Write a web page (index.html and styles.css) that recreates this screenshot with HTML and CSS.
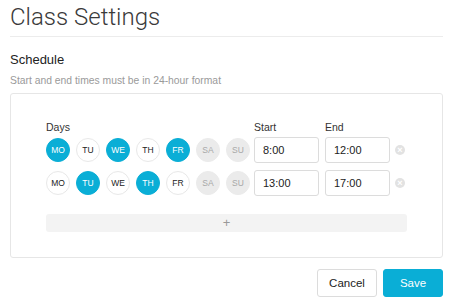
FILE: index.html
```html
<!DOCTYPE html>
<html>
<head>
    <title>Class Settings</title>
    <link rel="stylesheet" href="styles.css">
</head>
<body>
    <div class="page">
        <h1>Class Settings</h1>

        <h2>Schedule</h2>
        <p class="hint">Start and end times must be in 24-hour format</p>

        <div class="panel">
            <div class="schedule">
                <div class="label">Days</div>
                <div class="label">Start</div>
                <div class="label">End</div>
                <div></div>

                <div class="days">
                    <span class="day on">MO</span>
                    <span class="day">TU</span>
                    <span class="day on">WE</span>
                    <span class="day">TH</span>
                    <span class="day on">FR</span>
                    <span class="day off">SA</span>
                    <span class="day off">SU</span>
                </div>
                <input class="time" type="text" value="8:00">
                <input class="time" type="text" value="12:00">
                <span class="remove">&times;</span>

                <div class="days">
                    <span class="day">MO</span>
                    <span class="day on">TU</span>
                    <span class="day">WE</span>
                    <span class="day on">TH</span>
                    <span class="day">FR</span>
                    <span class="day off">SA</span>
                    <span class="day off">SU</span>
                </div>
                <input class="time" type="text" value="13:00">
                <input class="time" type="text" value="17:00">
                <span class="remove">&times;</span>
            </div>

            <button class="add">+</button>
        </div>

        <div class="actions">
            <button class="btn">Cancel</button>
            <button class="btn primary">Save</button>
        </div>
    </div>
</body>
</html>
```

FILE: styles.css
```css
body {
    margin: 0;
    font-family: "Liberation Sans", Arial, sans-serif;
    color: #333;
    background: #fff;
}
.page {
    padding: 0 7px 0 10px;
}
h1 {
    margin: 0;
    padding: 4px 0 6px;
    font-family: Roboto, "Liberation Sans", sans-serif;
    font-weight: 300;
    font-size: 24px;
    line-height: 26px;
    color: #3a3a3a;
    border-bottom: 1px solid #ececec;
}
h2 {
    margin: 15px 0 0;
    font-size: 13px;
    font-weight: normal;
    line-height: 16px;
    color: #222;
}
.hint {
    margin: 6px 0 0;
    font-size: 10.35px;
    line-height: 14px;
    color: #9a9a9a;
}
.panel {
    margin-top: 5px;
    border: 1px solid #e6e6e6;
    border-radius: 3px;
    padding: 27px 35px 25px;
}
.schedule {
    display: grid;
    grid-template-columns: 204px 65px 65px 10px;
    column-gap: 4px;
    row-gap: 7px;
    align-items: center;
}
.schedule > :nth-child(4n+3) { margin-left: 2px; }
.schedule > :nth-child(4n) { margin-left: 3px; }
.label {
    font-size: 10.5px;
    line-height: 12px;
    color: #333;
    margin-bottom: -3px;
}
.days {
    display: flex;
    gap: 6px;
}
.day {
    width: 22px;
    height: 22px;
    border-radius: 50%;
    border: 1px solid #e8e8e8;
    background: #fff;
    color: #222;
    font-size: 8.5px;
    display: flex;
    align-items: center;
    justify-content: center;
}
.day.on {
    background: #0aaed6;
    border-color: #0aaed6;
    color: #fff;
}
.day.off {
    background: #ebebeb;
    border-color: #ebebeb;
    color: #a8a8a8;
}
.time {
    box-sizing: border-box;
    width: 65px;
    height: 26px;
    border: 1px solid #dcdcdc;
    border-radius: 3px;
    padding: 0 8px;
    font-family: "Liberation Sans", Arial, sans-serif;
    font-size: 11px;
    color: #222;
    outline: none;
}
.remove {
    width: 10px;
    height: 10px;
    border-radius: 50%;
    background: #e2e2e2;
    color: #fff;
    font-size: 9px;
    line-height: 10px;
    text-align: center;
    font-weight: bold;
}
.add {
    display: block;
    width: 100%;
    height: 18px;
    margin-top: 18px;
    border: none;
    border-radius: 3px;
    background: #f3f3f3;
    color: #999;
    font-family: "Liberation Sans", Arial, sans-serif;
    font-size: 13px;
    line-height: 18px;
    padding: 0;
}
.actions {
    display: flex;
    justify-content: flex-end;
    gap: 6px;
    margin-top: 11px;
}
.btn {
    width: 60px;
    height: 28px;
    border: 1px solid #dcdcdc;
    border-radius: 3px;
    background: #fff;
    color: #222;
    font-family: "Liberation Sans", Arial, sans-serif;
    font-size: 11.5px;
    padding: 0;
}
.btn.primary {
    background: #0aaed6;
    border-color: #0aaed6;
    color: #fff;
}
```
